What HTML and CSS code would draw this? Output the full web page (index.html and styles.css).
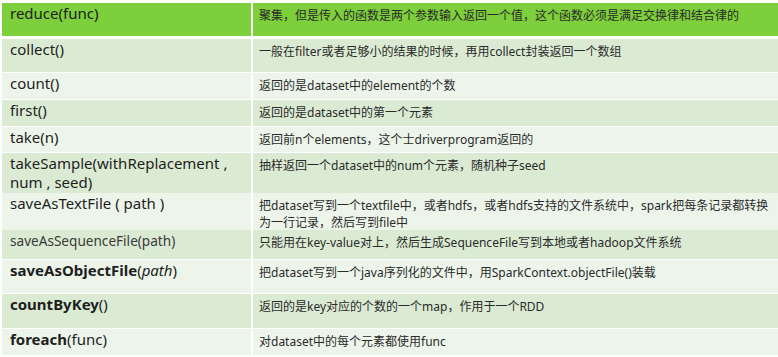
FILE: index.html
```html
<!DOCTYPE html>
<html lang="zh-CN">
<head>
    <meta charset="UTF-8">
    <meta name="viewport" content="width=device-width, initial-scale=1.0">
    <title>Spark Actions</title>
    <link rel="stylesheet" href="styles.css">
</head>
<body>
    <div class="actions">
        <div class="row head h33">
            <div class="cmd">reduce(func)</div>
            <div class="desc">聚集，但是传入的函数是两个参数输入返回一个值，这个函数必须是满足交换律和结合律的</div>
        </div>
        <div class="row dark h33">
            <div class="cmd">collect()</div>
            <div class="desc">一般在filter或者足够小的结果的时候，再用collect封装返回一个数组</div>
        </div>
        <div class="row light h26">
            <div class="cmd">count()</div>
            <div class="desc">返回的是dataset中的element的个数</div>
        </div>
        <div class="row dark h26">
            <div class="cmd">first()</div>
            <div class="desc">返回的是dataset中的第一个元素</div>
        </div>
        <div class="row light h25">
            <div class="cmd">take(n)</div>
            <div class="desc">返回前n个elements，这个士driverprogram返回的</div>
        </div>
        <div class="row dark h39">
            <div class="cmd">takeSample(withReplacement ,<br>num , seed)</div>
            <div class="desc">抽样返回一个dataset中的num个元素，随机种子seed</div>
        </div>
        <div class="row light h36">
            <div class="cmd">saveAsTextFile ( path )</div>
            <div class="desc">把dataset写到一个textfile中，或者hdfs，或者hdfs支持的文件系统中，spark把每条记录都转换<br>为一行记录，然后写到file中</div>
        </div>
        <div class="row dark h29">
            <div class="cmd small">saveAsSequenceFile(path)</div>
            <div class="desc">只能用在key-value对上，然后生成SequenceFile写到本地或者hadoop文件系统</div>
        </div>
        <div class="row light h33">
            <div class="cmd"><b>saveAsObjectFile</b>(<i>path</i>)</div>
            <div class="desc">把dataset写到一个java序列化的文件中，用SparkContext.objectFile()装载</div>
        </div>
        <div class="row dark h34">
            <div class="cmd"><b>countByKey</b>()</div>
            <div class="desc">返回的是key对应的个数的一个map，作用于一个RDD</div>
        </div>
        <div class="row light h26">
            <div class="cmd"><b>foreach</b>(func)</div>
            <div class="desc">对dataset中的每个元素都使用func</div>
        </div>
    </div>
</body>
</html>
```

FILE: styles.css
```css
body {
    margin: 3px 0 0 2px;
    padding: 0;
    background-color: #fff;
    font-family: "Noto Sans", "Noto Sans CJK SC", sans-serif;
}
.actions {
    width: 776px;
}
.row {
    display: grid;
    grid-template-columns: 249px 1fr;
    column-gap: 2px;
    margin-bottom: 1px;
}
.row.head {
    margin-bottom: 3px;
}
.cmd {
    padding: 1px 8px;
    font-size: 15px;
    line-height: 19px;
    color: #1e1e1e;
}
.cmd.small {
    font-size: 13.6px;
    color: #3a3a3a;
}
.cmd b {
    font-weight: bold;
}
.desc {
    padding: 4px 6px;
    font-size: 12px;
    line-height: 17px;
    color: #2a2a2a;
}

/* row colours */
.head > div {
    background-color: #7dcf3b;
}
.dark > div {
    background-color: #dbebd3;
}
.light > div {
    background-color: #edf5ea;
}

/* row heights */
.h25 { height: 25px; }
.h26 { height: 26px; }
.h29 { height: 29px; }
.h33 { height: 33px; }
.h34 { height: 34px; }
.h36 { height: 36px; }
.h39 { height: 39px; }
```
